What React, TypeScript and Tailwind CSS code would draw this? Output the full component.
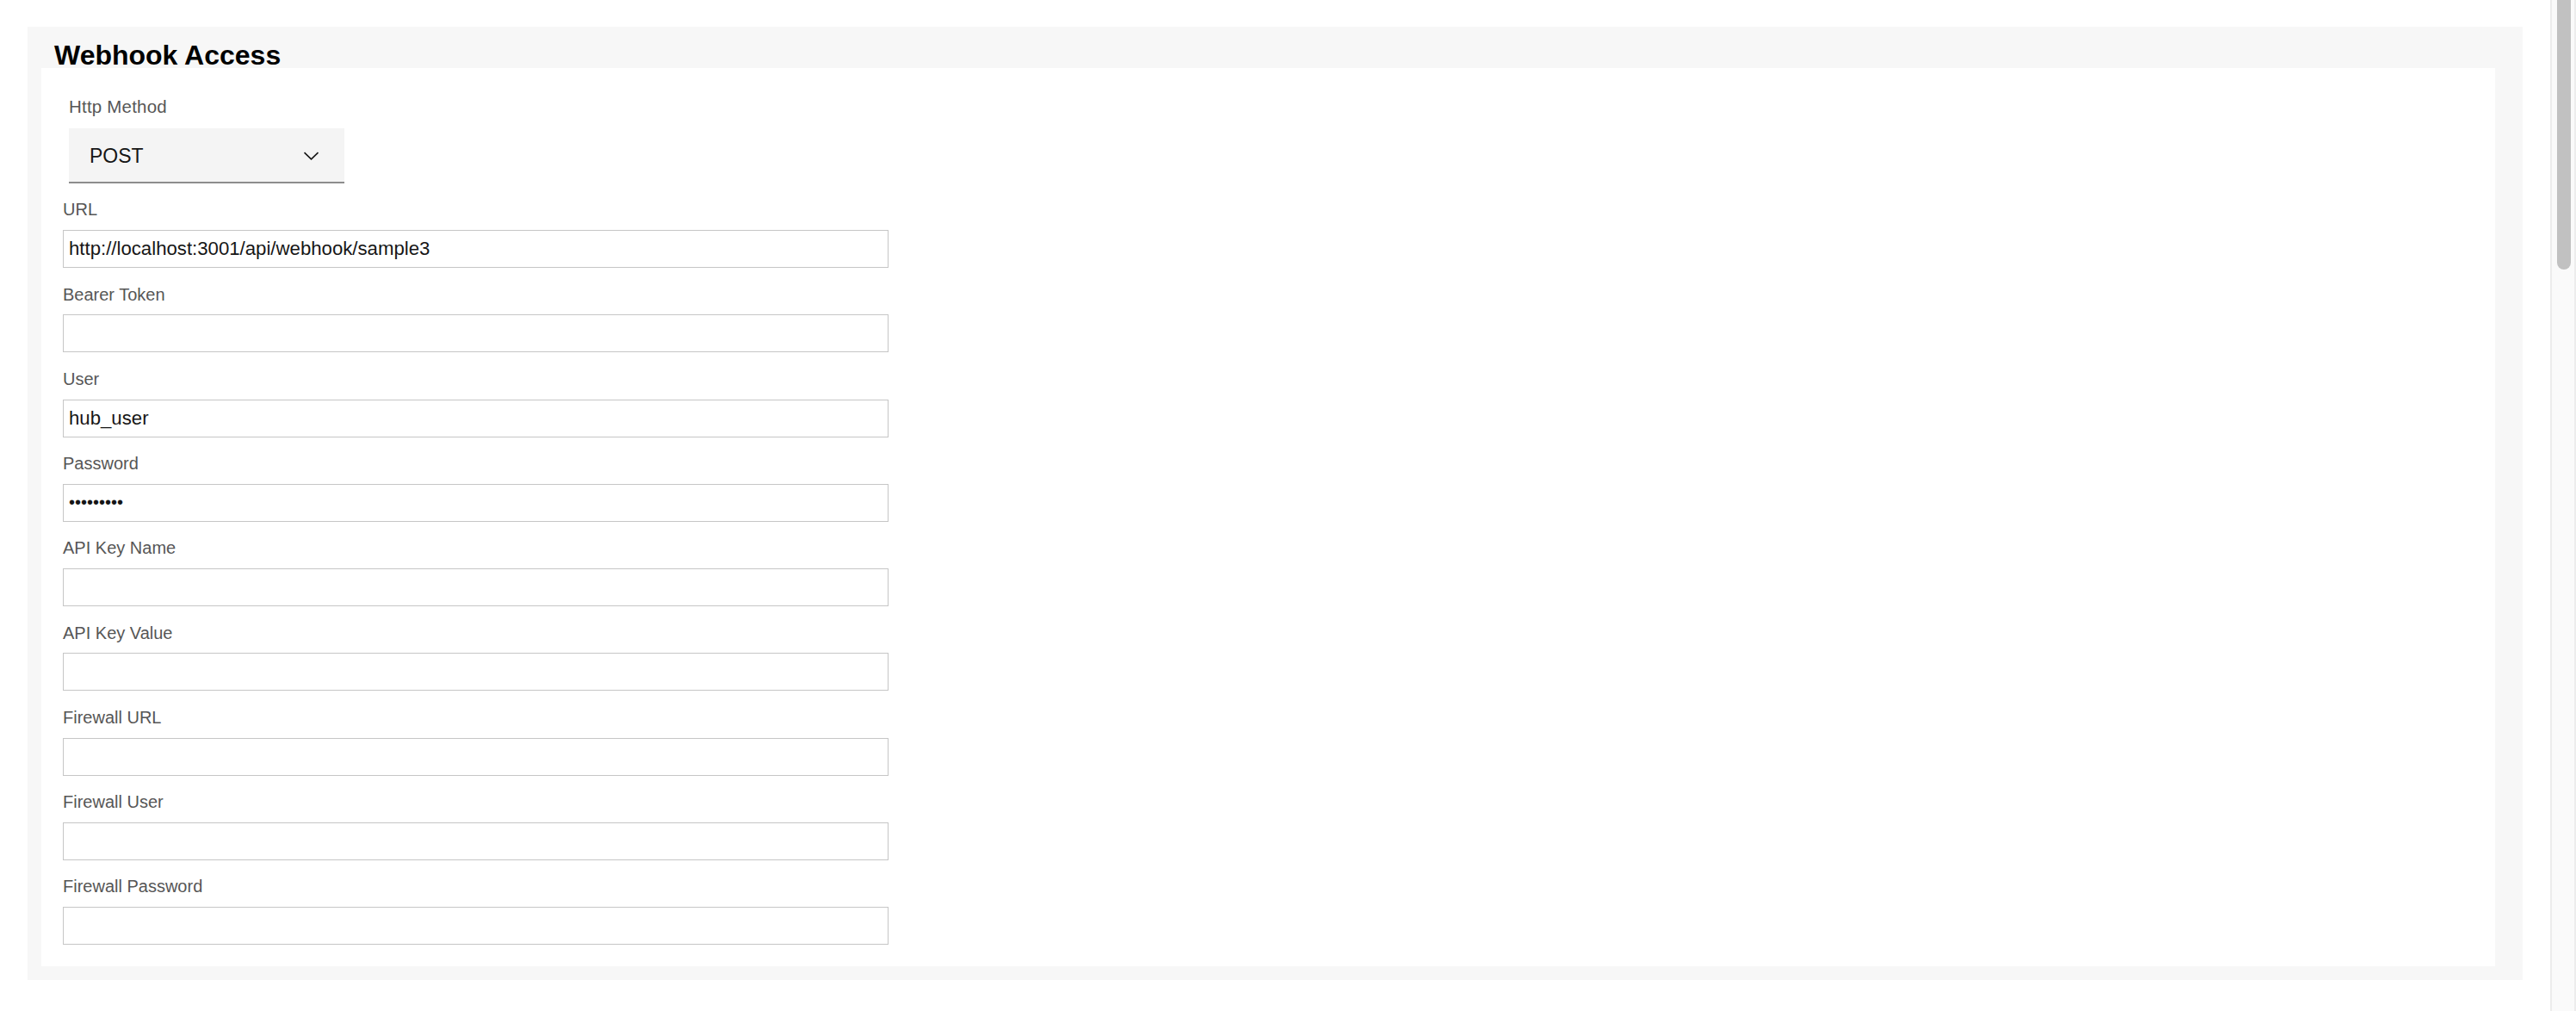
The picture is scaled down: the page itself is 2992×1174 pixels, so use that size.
import React from 'react';

type Field = {
  label: string;
  value: string;
  type?: string;
};

const fields: Field[] = [
  { label: 'URL', value: 'http://localhost:3001/api/webhook/sample3' },
  { label: 'Bearer Token', value: '' },
  { label: 'User', value: 'hub_user' },
  { label: 'Password', value: 'password1', type: 'password' },
  { label: 'API Key Name', value: '' },
  { label: 'API Key Value', value: '' },
  { label: 'Firewall URL', value: '' },
  { label: 'Firewall User', value: '' },
  { label: 'Firewall Password', value: '' },
];

const ChevronDown: React.FC = () => (
  <svg width="19" height="10" viewBox="0 0 19 10" fill="none">
    <polyline points="1.5,1.2 9.5,8.8 17.5,1.2" stroke="#161616" strokeWidth="1.6" />
  </svg>
);

const TextField: React.FC<{ field: Field; last: boolean }> = ({ field, last }) => (
  <div className={last ? '' : 'mb-[20.5px]'}>
    <label className="mb-[13.75px] block h-[20px] text-[20px] leading-[20px] text-[#565656]">
      {field.label}
    </label>
    <input
      type={field.type ?? 'text'}
      defaultValue={field.value}
      readOnly
      className={
        'block h-[44px] w-[959px] border border-[#c6c6c6] bg-white pl-[6px] text-[#161616] outline-none ' +
        (field.type === 'password' ? 'text-[20px]' : 'text-[22.2px]')
      }
    />
  </div>
);

export default function App() {
  return (
    <div className="flex h-[1174px] w-full overflow-hidden bg-white font-['Liberation_Sans',Arial,sans-serif]">
      <div className="flex-1 px-[32px] pt-[31px]">
        <div className="bg-[#f7f7f7] pb-[16px] pl-[16px] pr-[32px]">
          <div className="h-[48px] pl-[15px] pt-[17px]">
            <h1 className="text-[32px] font-bold leading-[32px] text-black">Webhook Access</h1>
          </div>

          <div className="bg-white pb-[25px] pt-[34px]">
            {/* method select */}
            <div className="ml-[32px]">
              <div className="mb-[15px] h-[21px] text-[20.5px] leading-[21px] tracking-[0.2px] text-[#565656]">
                Http Method
              </div>
              <div className="flex h-[64px] w-[320px] items-center justify-between border-b-2 border-[#8d8d8d] bg-[#f4f4f4] pl-[24px] pr-[29px] pt-[2px]">
                <span className="text-[23px] text-[#161616]">POST</span>
                <ChevronDown />
              </div>
            </div>

            <div className="ml-[25px] mt-[20.3px]">
              {fields.map((f, i) => (
                <TextField key={f.label} field={f} last={i === fields.length - 1} />
              ))}
            </div>
          </div>
        </div>
      </div>

      {/* scrollbar */}
      <div className="w-[30px] border-l-2 border-r-2 border-[#ececec] bg-[#fafafa] pl-[6px]">
        <div className="h-[313px] w-[16px] rounded-b-full bg-[#c1c1c1]" />
      </div>
    </div>
  );
}
